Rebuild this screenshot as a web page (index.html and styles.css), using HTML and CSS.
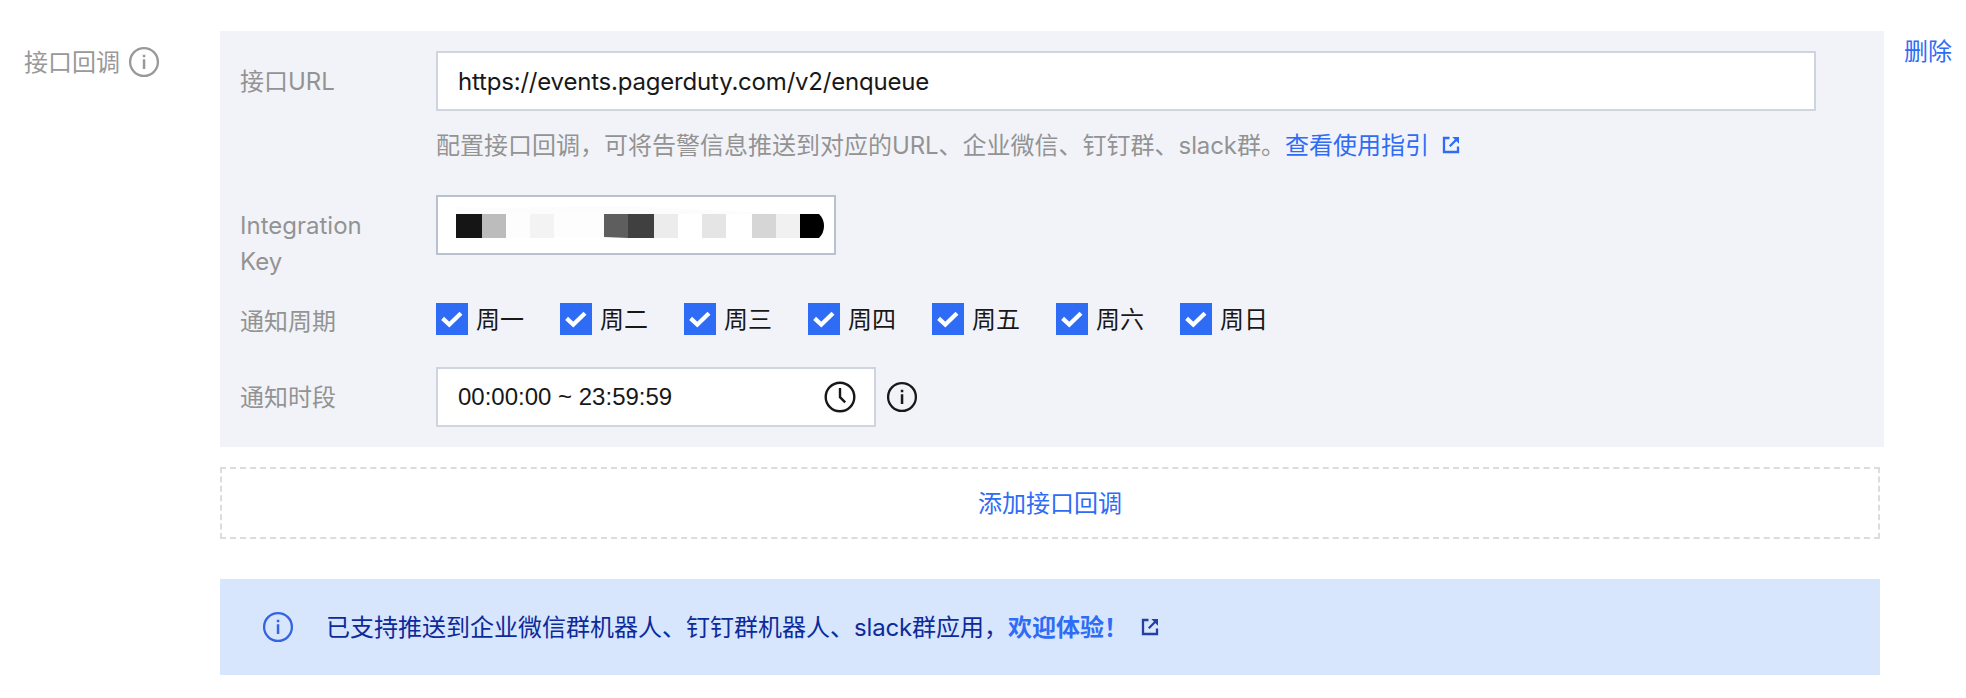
FILE: index.html
```html
<!DOCTYPE html>
<html lang="zh-CN">
<head>
<meta charset="utf-8">
<title>接口回调</title>
<link rel="stylesheet" href="styles.css">
</head>
<body>
<svg width="0" height="0" class="defs">
  <symbol id="info" viewBox="0 0 32 32">
    <circle cx="16" cy="16" r="13.9" fill="none" stroke="currentColor" stroke-width="2.3"/>
    <path d="M14.8 8.8h2.5v2.4h-2.5zM14.8 13.2h2.5V23h-2.5z" fill="currentColor"/>
  </symbol>
  <symbol id="external" viewBox="0 0 18 18">
    <path d="M7.5 2H2v14h14v-5.5M7.8 10.2L15 3" fill="none" stroke="currentColor" stroke-width="2.3"/>
    <path d="M10.3 1H17v6.7z" fill="currentColor"/>
  </symbol>
  <symbol id="check" viewBox="0 0 32 32">
    <path d="M6.6 15.4L13.3 21.6L25 10.2" fill="none" stroke="currentColor" stroke-width="4.2"/>
  </symbol>
</svg>
<main class="form">
  <div class="form-label"><span>接口回调</span><svg class="icon"><use href="#info"/></svg></div>
  <div class="content">
    <section class="panel">
      <div class="row row-url">
        <label class="label">接口<span class="latin">URL</span></label>
        <div class="field">
          <div class="input input-url"><span class="url">https://events.pagerduty.com/v2/enqueue</span></div>
          <p class="hint">配置接口回调，可将告警信息推送到对应的<span class="latin">URL</span>、企业微信、钉钉群、<span class="latin">slack</span>群。<a class="link">查看使用指引<svg class="external"><use href="#external"/></svg></a></p>
        </div>
      </div>
      <div class="row row-key">
        <label class="label latin">Integration Key</label>
        <div class="input input-key">
          <svg class="mask" viewBox="0 0 370 32">
            <path d="M0 8V1L20 2Q90 2 150-1Q230 3 330 8z" fill="#fcfcfc"/>
            <path d="M0 8h26v24H0z" fill="#151515"/>
            <path d="M26 8h24v24H26z" fill="#bcbcbc"/>
            <path d="M50 8h24v24H50z" fill="#fdfdfd"/>
            <path d="M74 8h24v24H74z" fill="#f3f3f3"/>
            <path d="M98 8h50v23H98z" fill="#fdfdfd"/>
            <path d="M148 8h24v24L148 31z" fill="#5e5e5e"/>
            <path d="M172 8h26v24h-26z" fill="#404040"/>
            <path d="M198 8h24v24h-24z" fill="#ececec"/>
            <path d="M246 8h24v24h-24z" fill="#e5e5e5"/>
            <path d="M296 8h24v24h-24z" fill="#d6d6d6"/>
            <path d="M320 8h24v24h-24z" fill="#f1f1f1"/>
            <path d="M344 8h19q5 5 5 12t-5 12h-19z" fill="#000"/>
          </svg>
        </div>
      </div>
      <div class="row row-days">
        <label class="label">通知周期</label>
        <div class="days">
          <span class="day"><svg class="box"><use href="#check"/></svg><span class="day-name">周一</span></span>
          <span class="day"><svg class="box"><use href="#check"/></svg><span class="day-name">周二</span></span>
          <span class="day"><svg class="box"><use href="#check"/></svg><span class="day-name">周三</span></span>
          <span class="day"><svg class="box"><use href="#check"/></svg><span class="day-name">周四</span></span>
          <span class="day"><svg class="box"><use href="#check"/></svg><span class="day-name">周五</span></span>
          <span class="day"><svg class="box"><use href="#check"/></svg><span class="day-name">周六</span></span>
          <span class="day"><svg class="box"><use href="#check"/></svg><span class="day-name">周日</span></span>
        </div>
      </div>
      <div class="row row-time">
        <label class="label">通知时段</label>
        <div class="input input-time"><span class="time">00:00:00 ~ 23:59:59</span>
          <svg class="icon" viewBox="0 0 32 32"><circle cx="16" cy="16" r="14.3" fill="none" stroke="currentColor" stroke-width="2.4"/><path d="M16 7v9.2l5.2 5.2" fill="none" stroke="currentColor" stroke-width="2.4"/></svg>
        </div>
        <svg class="icon time-info"><use href="#info"/></svg>
      </div>
    </section>
    <a class="add">添加接口回调</a>
    <div class="banner">
      <svg class="icon banner-icon"><use href="#info"/></svg>
      <p class="banner-text">已支持推送到企业微信群机器人、钉钉群机器人、<span class="latin">slack</span>群应用，<a class="welcome">欢迎体验！</a></p>
      <svg class="external"><use href="#external"/></svg>
    </div>
  </div>
  <a class="link delete">删除</a>
</main>
</body>
</html>
```
FILE: styles.css
```css
* { box-sizing: border-box; }
body {
  margin: 0;
  background: #fff;
  color: #181818;
  font: 24px/36px "Noto Sans CJK SC", sans-serif;
}
p { margin: 0; white-space: nowrap; }
svg { display: block; flex: none; }
.defs { position: absolute; }
.latin, .url { font-family: Inter, "Noto Sans CJK SC", sans-serif; }
.url { letter-spacing: -0.2px; padding-top: 2px; }
.icon { width: 32px; height: 32px; }
.external { width: 18px; height: 18px; }
.link { color: #2e6cf6; }

.form { display: flex; padding: 31px 0 0 24px; }
.form-label {
  display: flex;
  align-items: center;
  gap: 8px;
  width: 196px;
  height: 36px;
  margin-top: 13px;
  color: #999;
}
.form-label span { padding-bottom: 2px; }
.content { width: 1664px; }
.delete { margin: 1px 0 0 20px; }

.panel {
  height: 416px;
  padding: 20px;
  background: #f2f3f8;
}
.row { display: flex; align-items: flex-start; }
.label { width: 196px; padding-right: 60px; color: #939393; }
.row-url { height: 144px; }
.row-key { height: 108px; }
.row-days { height: 64px; }
.row-url .label { padding-top: 11px; }
.row-key .label { padding-top: 13px; }
.row-time .label { padding-top: 11px; }
.row-days .label { margin-top: -1px; }

.input {
  display: flex;
  align-items: center;
  height: 60px;
  border: 2px solid #cfd5de;
  background: #fff;
  padding: 0 20px;
}
.input-url { width: 1380px; }
.input-key { width: 400px; border-color: #b8c2cf; padding: 0 8px 0 18px; }
.input-time { width: 440px; justify-content: space-between; padding-right: 18px; }
.time { font-family: "Liberation Sans", sans-serif; }
.mask { width: 370px; height: 32px; margin-top: -6px; }
.time-info { margin: 14px 0 0 10px; }

.hint { margin-top: 15px; color: #939393; }
.hint .latin { letter-spacing: -0.1px; }
.hint .external { display: inline-block; margin-left: 13px; vertical-align: 0; }

.days { display: flex; gap: 36px; }
.day { display: flex; align-items: center; gap: 8px; height: 32px; }
.day-name { padding-bottom: 2px; }
.box { width: 32px; height: 32px; background: #2e6cf6; color: #fff; }

.add {
  display: flex;
  align-items: center;
  justify-content: center;
  width: 1660px;
  height: 72px;
  margin-top: 20px;
  padding-bottom: 2px;
  border: 2px dashed #dcdcdc;
  color: #2e6cf6;
}
.banner {
  display: flex;
  align-items: center;
  width: 1660px;
  height: 96px;
  margin-top: 40px;
  padding-left: 42px;
  background: #d7e5fd;
  color: #0d2a9b;
}
.banner-icon { color: #3464e0; }
.banner-text { margin-left: 32px; }
.banner-text .latin { letter-spacing: -0.15px; }
.banner .external { margin-left: 13px; color: #2440a5; }
.welcome { color: #2e6cf6; font-weight: 700; }
```
